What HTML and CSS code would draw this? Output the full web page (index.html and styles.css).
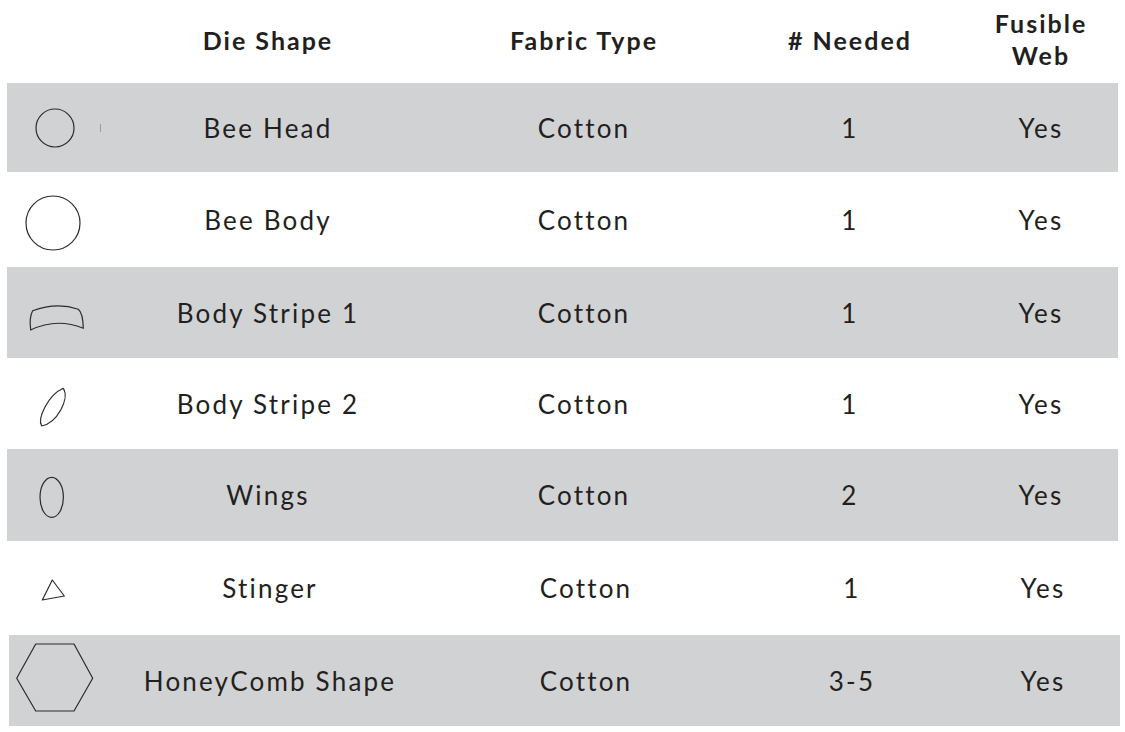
FILE: index.html
```html
<!DOCTYPE html>
<html>
<head>
<meta charset="utf-8">
<link rel="stylesheet" href="styles.css">
</head>
<body>
<div class="table">
  <div class="row head h0">
    <div class="cell icon"></div>
    <div class="cell">Die Shape</div>
    <div class="cell">Fabric Type</div>
    <div class="cell"># Needed</div>
    <div class="cell two">Fusible<br>Web</div>
  </div>
  <div class="row gray h1">
    <div class="cell icon"><svg width="97" height="89" viewBox="0 0 97 89"><circle cx="48" cy="45" r="19" class="shape"/><line x1="93.5" y1="41" x2="93.5" y2="49" class="tick"/></svg></div>
    <div class="cell">Bee Head</div>
    <div class="cell">Cotton</div>
    <div class="cell">1</div>
    <div class="cell">Yes</div>
  </div>
  <div class="row h2">
    <div class="cell icon"><svg width="97" height="95" viewBox="0 0 97 95"><circle cx="46" cy="51" r="27" class="shape"/></svg></div>
    <div class="cell">Bee Body</div>
    <div class="cell">Cotton</div>
    <div class="cell">1</div>
    <div class="cell">Yes</div>
  </div>
  <div class="row gray h3">
    <div class="cell icon"><svg width="97" height="91" viewBox="0 0 97 91"><path class="shape" d="M25.7,43.7 Q49.7,35 71.3,42.3 Q76,46 76.3,61.3 Q49.7,50.4 23.7,63 Q22,50 25.7,43.7 Z"/></svg></div>
    <div class="cell">Body Stripe 1</div>
    <div class="cell">Cotton</div>
    <div class="cell">1</div>
    <div class="cell">Yes</div>
  </div>
  <div class="row h4">
    <div class="cell icon"><svg width="97" height="91" viewBox="0 0 97 91"><path class="shape" d="M56.3,30.3 C41,37 30,61 34.7,68 C50,65 63,41 56.3,30.3 Z"/></svg></div>
    <div class="cell">Body Stripe 2</div>
    <div class="cell">Cotton</div>
    <div class="cell">1</div>
    <div class="cell">Yes</div>
  </div>
  <div class="row gray h5">
    <div class="cell icon"><svg width="97" height="92" viewBox="0 0 97 92"><ellipse cx="44.7" cy="48.3" rx="11.7" ry="20" class="shape"/></svg></div>
    <div class="cell">Wings</div>
    <div class="cell">Cotton</div>
    <div class="cell">2</div>
    <div class="cell">Yes</div>
  </div>
  <div class="row shift h6">
    <div class="cell icon"><svg width="97" height="94" viewBox="0 0 97 94"><polygon class="shape" points="43.3,39 33.3,59 55.3,55"/></svg></div>
    <div class="cell">Stinger</div>
    <div class="cell">Cotton</div>
    <div class="cell">1</div>
    <div class="cell">Yes</div>
  </div>
  <div class="row gray shift h7">
    <div class="cell icon"><svg width="97" height="91" viewBox="0 0 97 91"><polygon class="shape" points="7.7,43.3 26.7,9 65,9 83.7,43.3 65,76 26.7,76"/></svg></div>
    <div class="cell">HoneyComb Shape</div>
    <div class="cell">Cotton</div>
    <div class="cell">3-5</div>
    <div class="cell">Yes</div>
  </div>
</div>
</body>
</html>
```
FILE: styles.css
```css
html, body {
  margin: 0;
  padding: 0;
  background: #ffffff;
}
body {
  width: 1125px;
  height: 732px;
  overflow: hidden;
  font-family: "Lato", "DejaVu Sans", sans-serif;
  color: #231f20;
}
.table {
  display: flex;
  flex-direction: column;
}
.row {
  display: grid;
  grid-template-columns: 97px 328px 304px 228px 154px;
  width: 1111px;
  margin-left: 7px;
  font-size: 26px;
  letter-spacing: 2.2px;
}
.row.shift {
  margin-left: 9px;
}
.gray {
  background: #d1d2d4;
}
.cell {
  display: flex;
  align-items: center;
  justify-content: center;
  text-align: center;
  white-space: nowrap;
}
.cell.icon {
  justify-content: flex-start;
}
.cell.icon svg {
  display: block;
}
.head {
  font-weight: 700;
  font-size: 25px;
  letter-spacing: 2px;
}
.head .cell {
  padding-bottom: 4px;
}
.head .cell.two {
  line-height: 32px;
  padding-bottom: 5px;
}
.h0 { height: 83px; }
.h1 { height: 89px; }
.h2 { height: 95px; }
.h3 { height: 91px; }
.h4 { height: 91px; }
.h5 { height: 92px; }
.h6 { height: 94px; }
.h7 { height: 91px; }
.shape {
  fill: none;
  stroke: #2b2b2b;
  stroke-width: 1.2;
  stroke-linejoin: round;
}
.tick {
  stroke: #9a9a9a;
  stroke-width: 1;
}
```
